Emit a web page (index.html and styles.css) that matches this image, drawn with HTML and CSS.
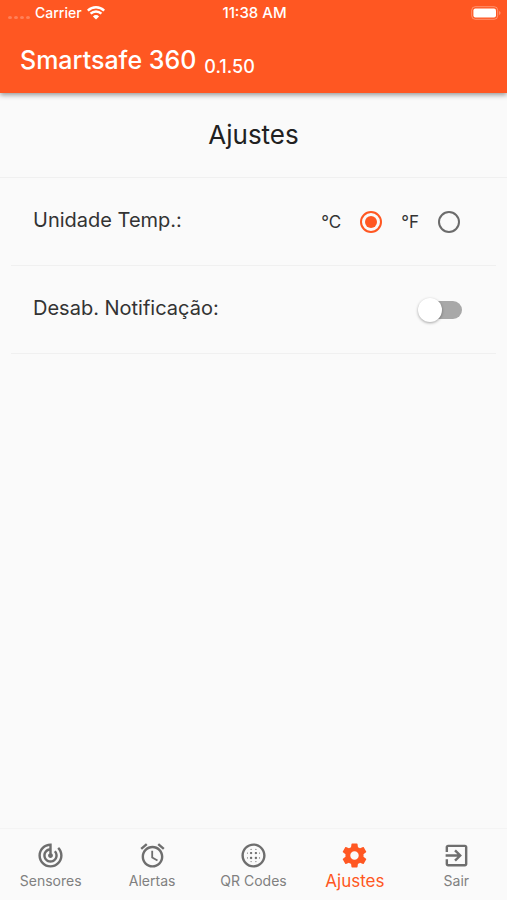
FILE: index.html
```html
<!DOCTYPE html>
<html lang="pt">
<head>
  <meta charset="UTF-8">
  <meta name="viewport" content="width=device-width, initial-scale=1.0">
  <title>Smartsafe 360</title>
  <link rel="stylesheet" href="styles.css">
</head>
<body>

<!-- App bar -->
<header class="app-bar">
  <div class="status-bar">
    <div class="carrier">
      <span class="signal"><i></i><i></i><i></i><i></i></span>
      <span>Carrier</span>
      <svg class="wifi" viewBox="0 0 18 14" width="18" height="14">
        <path d="M0.8 4.6a11.8 11.8 0 0 1 16.4 0M3.6 7.7a7.8 7.8 0 0 1 10.8 0" fill="none" stroke="#fff" stroke-width="2.5"/>
        <path d="M9 13.6l-3.1-3.2a4.4 4.4 0 0 1 6.2 0z" fill="#fff"/>
      </svg>
    </div>
    <span class="time">11:38 AM</span>
    <div class="battery">
      <svg viewBox="0 0 30 14" width="30" height="14">
        <rect x="0.7" y="0.7" width="26" height="12.6" rx="3.6" fill="none" stroke="#fff" stroke-opacity="0.35"/>
        <rect x="2.4" y="2.4" width="22.6" height="9.2" rx="2" fill="#fff"/>
        <path d="M28.2 5a2.2 2.2 0 0 1 0 4z" fill="#fff" fill-opacity="0.4"/>
      </svg>
    </div>
  </div>
  <div class="brand">
    <h1>Smartsafe 360</h1>
    <span class="version">0.1.50</span>
  </div>
</header>

<!-- Settings -->
<main>
  <h2>Ajustes</h2>
  <div class="settings">
    <div class="setting" role="radiogroup" aria-labelledby="unit-label">
      <span class="setting-label" id="unit-label">Unidade Temp.:</span>
      <div class="units">
        <label for="celsius">°C</label>
        <input type="radio" class="radio" id="celsius" name="unit" checked>
        <label for="fahrenheit">°F</label>
        <input type="radio" class="radio" id="fahrenheit" name="unit">
      </div>
    </div>
    <div class="setting">
      <label class="setting-label" for="mute">Desab. Notificação:</label>
      <input type="checkbox" class="switch" id="mute" role="switch">
    </div>
  </div>
</main>

<!-- Bottom navigation -->
<nav class="bottom-nav">
  <a href="#sensores">
    <svg viewBox="0 0 24 24"><path d="M19.07 4.93l-1.41 1.41C19.1 7.79 20 9.79 20 12c0 4.42-3.58 8-8 8s-8-3.58-8-8c0-4.08 3.05-7.44 7-7.93v2.02C8.16 6.57 6 9.03 6 12c0 3.31 2.69 6 6 6s6-2.69 6-6c0-1.66-.67-3.16-1.76-4.24l-1.41 1.41C15.55 9.9 16 10.9 16 12c0 2.21-1.79 4-4 4s-4-1.79-4-4c0-1.86 1.28-3.41 3-3.86v2.14c-.6.35-1 .98-1 1.72 0 1.1.9 2 2 2s2-.9 2-2c0-.74-.4-1.38-1-1.72V2h-1C6.48 2 2 6.48 2 12s4.48 10 10 10 10-4.48 10-10c0-2.76-1.12-5.26-2.93-7.07z"/></svg>
    <span>Sensores</span>
  </a>
  <a href="#alertas">
    <svg viewBox="0 0 24 24"><path d="M22 5.72l-4.6-3.86-1.29 1.53 4.6 3.86L22 5.72zM7.88 3.39L6.6 1.86 2 5.71l1.29 1.53 4.59-3.85zM12.5 8H11v6l4.75 2.85.75-1.23-4-2.37V8zM12 4c-4.97 0-9 4.03-9 9s4.02 9 9 9c4.97 0 9-4.03 9-9s-4.03-9-9-9zm0 16c-3.87 0-7-3.13-7-7s3.13-7 7-7 7 3.13 7 7-3.13 7-7 7z"/></svg>
    <span>Alertas</span>
  </a>
  <a href="#qr-codes">
    <svg viewBox="0 0 24 24"><path d="M10 9c-.55 0-1 .45-1 1s.45 1 1 1 1-.45 1-1-.45-1-1-1zm0 4c-.55 0-1 .45-1 1s.45 1 1 1 1-.45 1-1-.45-1-1-1zM7 9.5c-.28 0-.5.22-.5.5s.22.5.5.5.5-.22.5-.5-.22-.5-.5-.5zm3 7c-.28 0-.5.22-.5.5s.22.5.5.5.5-.22.5-.5-.22-.5-.5-.5zm-3-3c-.28 0-.5.22-.5.5s.22.5.5.5.5-.22.5-.5-.22-.5-.5-.5zm3-6c.28 0 .5-.22.5-.5s-.22-.5-.5-.5-.5.22-.5.5.22.5.5.5zM14 9c-.55 0-1 .45-1 1s.45 1 1 1 1-.45 1-1-.45-1-1-1zm0-1.500c.28 0 .5-.22.5-.5s-.22-.5-.5-.5-.5.22-.5.5.22.5.5.5zm3 6c-.28 0-.5.22-.5.5s.22.5.5.5.5-.22.5-.5-.22-.5-.5-.5zm0-4c-.28 0-.5.22-.5.5s.22.5.5.5.5-.22.5-.5-.22-.5-.5-.5zM12 2C6.480 2 2 6.480 2 12s4.480 10 10 10 10-4.480 10-10S17.520 2 12 2zm0 18c-4.420 0-8-3.580-8-8s3.580-8 8-8 8 3.580 8 8-3.580 8-8 8zm2-3.500c-.28 0-.5.22-.5.5s.22.5.5.5.5-.22.5-.5-.22-.5-.5-.5zm0-3.500c-.55 0-1 .45-1 1s.45 1 1 1 1-.45 1-1-.45-1-1-1z"/></svg>
    <span>QR Codes</span>
  </a>
  <a href="#ajustes" class="active" aria-current="page">
    <svg viewBox="0 0 24 24"><path d="M19.43 12.98c.04-.32.07-.64.07-.98s-.03-.66-.07-.98l2.110-1.650c.19-.15.24-.42.12-.64l-2-3.460c-.12-.22-.39-.3-.61-.22l-2.490 1c-.52-.4-1.080-.73-1.690-.98l-.38-2.650C14.460 2.180 14.250 2 14 2h-4c-.25 0-.46.18-.49.42l-.38 2.650c-.61.25-1.170.59-1.690.98l-2.490-1c-.23-.09-.49 0-.61.22l-2 3.460c-.13.22-.07.49.12.64l2.110 1.650c-.04.32-.07.65-.07.98s.03.66.07.98l-2.110 1.650c-.19.15-.24.42-.12.64l2 3.460c.12.22.39.3.61.22l2.490-1c.52.4 1.080.73 1.690.98l.38 2.650c.03.24.24.42.49.42h4c.25 0 .46-.18.49-.42l.38-2.650c.61-.25 1.170-.59 1.690-.98l2.490 1c.23.09.49 0 .61-.22l2-3.460c.12-.22.07-.49-.12-.64l-2.110-1.650zM12 15.500c-1.930 0-3.500-1.570-3.500-3.500s1.570-3.500 3.500-3.500 3.500 1.570 3.500 3.500-1.570 3.500-3.500 3.500z"/></svg>
    <span>Ajustes</span>
  </a>
  <a href="#sair">
    <svg viewBox="0 0 24 24"><path d="M10.090 15.590L11.500 17l5-5-5-5-1.410 1.410L12.670 11H3v2h9.670l-2.580 2.590zM19 3H5c-1.110 0-2 .9-2 2v4h2V5h14v14H5v-4H3v4c0 1.100.89 2 2 2h14c1.100 0 2-.9 2-2V5c0-1.100-.9-2-2-2z"/></svg>
    <span>Sair</span>
  </a>
</nav>

</body>
</html>
```
FILE: styles.css
```css
/* General Reset */
* {
  margin: 0;
  padding: 0;
  box-sizing: border-box;
}

body {
  display: flex;
  flex-direction: column;
  min-height: 100vh;
  background: #fafafa;
  color: #333;
  font-family: Inter, "Liberation Sans", sans-serif;
}

/* App bar */
.app-bar {
  background: #ff5722;
  color: #fff;
  box-shadow: 0 2px 5px rgba(0, 0, 0, 0.4);
}

.status-bar {
  display: grid;
  grid-template-columns: 1fr auto 1fr;
  align-items: center;
  height: 25px;
  padding: 0 6px 0 8px;
  font-size: 14px;
  font-weight: 500;
}

.carrier {
  display: flex;
  align-items: center;
  gap: 5px;
}

.signal {
  display: flex;
  gap: 2px;
  padding-top: 9px;
}

.signal i {
  width: 4px;
  height: 3px;
  border-radius: 50%;
  background: rgba(255, 255, 255, 0.25);
}

.time {
  font-size: 15px;
}

.battery {
  display: flex;
  justify-content: flex-end;
}

.brand {
  display: flex;
  align-items: flex-end;
  gap: 8px;
  padding: 19px 20px 17px;
}

.brand h1 {
  font-size: 25px;
  font-weight: 500;
  line-height: 32px;
}

.version {
  font-size: 18px;
  font-weight: 500;
  line-height: 18px;
}

/* Settings */
main {
  flex: 1;
}

h2 {
  padding: 24px 0;
  border-bottom: 1px solid #f0f0f0;
  color: #212121;
  font-size: 26px;
  font-weight: 400;
  line-height: 36px;
  text-align: center;
}

.settings {
  padding: 0 11px;
}

.setting {
  display: flex;
  align-items: center;
  justify-content: space-between;
  height: 88px;
  padding: 0 34px 0 22px;
  border-bottom: 1px solid #f0f0f0;
}

.setting-label {
  padding-bottom: 4px;
  font-size: 20px;
}

.units {
  display: flex;
  align-items: center;
  gap: 19px;
  padding-right: 2px;
  font-size: 17px;
}

.radio {
  appearance: none;
  display: grid;
  place-items: center;
  width: 22px;
  height: 22px;
  border: 2px solid #6b6b6b;
  border-radius: 50%;
}

.radio:checked {
  border-color: #ff5722;
}

.radio:checked::before {
  content: "";
  width: 12px;
  height: 12px;
  border-radius: 50%;
  background: #ff5722;
}

.switch {
  appearance: none;
  display: flex;
  align-items: center;
  width: 40px;
  height: 18px;
  border-radius: 9px;
  background: #a8a8a8;
}

.switch::before {
  content: "";
  flex: none;
  width: 24px;
  height: 24px;
  margin-left: -4px;
  border-radius: 50%;
  background: #fff;
  box-shadow: 0 1px 3px rgba(0, 0, 0, 0.35);
}

.switch:checked {
  justify-content: flex-end;
  background: #ffab91;
}

.switch:checked::before {
  background: #ff5722;
}

/* Bottom navigation */
.bottom-nav {
  display: grid;
  grid-template-columns: repeat(5, 1fr);
  height: 72px;
  border-top: 1px solid #f4f4f4;
}

.bottom-nav a {
  display: flex;
  flex-direction: column;
  align-items: center;
  padding-top: 12px;
  color: #808080;
  font-size: 14px;
  line-height: 22px;
  text-decoration: none;
}

.bottom-nav svg {
  width: 29px;
  height: 29px;
  fill: #6e6e6e;
}

.bottom-nav .active {
  color: #ff5722;
  font-size: 17px;
}

.bottom-nav .active svg {
  fill: #ff5722;
}
```
